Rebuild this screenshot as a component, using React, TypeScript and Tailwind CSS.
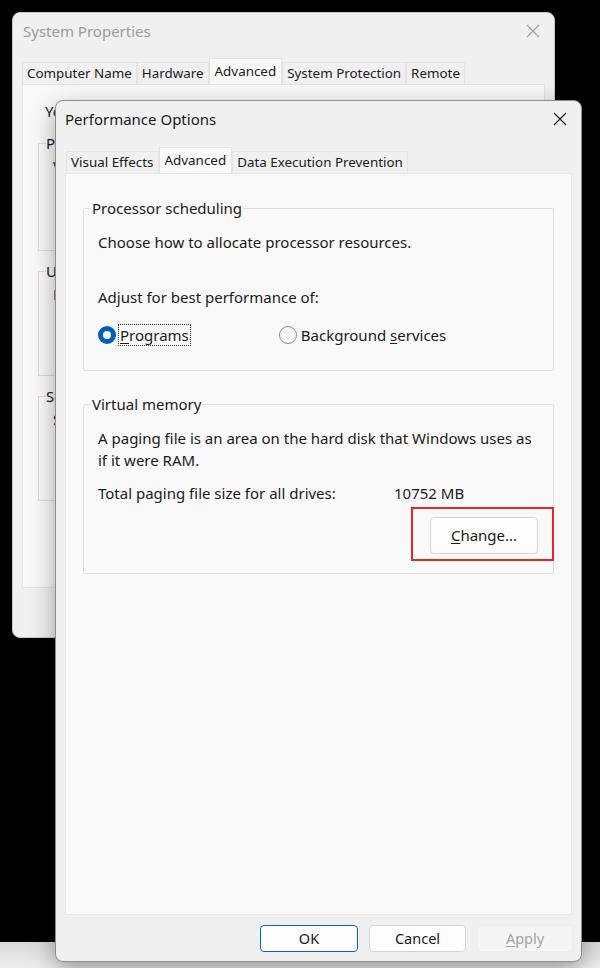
import React from "react";

const font = { fontFamily: '"Noto Sans", "Segoe UI", Arial, sans-serif' };

const CloseIcon = ({ color }: { color: string }) => (
  <svg width="16" height="16" viewBox="0 0 16 16">
    <path d="M2 2 L14 14 M14 2 L2 14" stroke={color} strokeWidth="1.2" fill="none" />
  </svg>
);

const Tab = ({ label, active }: { label: string; active?: boolean }) => (
  <div
    className={
      active
        ? "h-[26px] -mb-[1px] px-[5px] flex items-center bg-[#f9f9f9] border border-b-0 border-[#e3e3e3] text-[#1a1a1a] relative z-10"
        : "h-[22px] mt-[4px] px-[4px] flex items-center bg-[#f0f0f0] border border-b-0 border-[#e3e3e3] text-[#1a1a1a]"
    }
  >
    <span>{label}</span>
  </div>
);

const Radio = ({ checked }: { checked?: boolean }) =>
  checked ? (
    <div className="w-[18px] h-[18px] rounded-full bg-[#005fb8] flex items-center justify-center">
      <div className="w-[8px] h-[8px] rounded-full bg-white" />
    </div>
  ) : (
    <div className="w-[18px] h-[18px] rounded-full border border-[#8a8a8a] bg-[#f6f6f6]" />
  );

const Group = ({ title, className, children }: { title: string; className: string; children: React.ReactNode }) => (
  <fieldset className={"border border-[#dedede] rounded-[2px] pl-[14px] " + className}>
    <legend className="-ml-[7px] px-[1px] text-[#1a1a1a] leading-[20px]">{title}</legend>
    {children}
  </fieldset>
);

const BackGroup = ({ title, line, className }: { title: string; line: string; className: string }) => (
  <fieldset className={"border border-[#dcdcdc] pl-[14px] whitespace-nowrap " + className}>
    <legend className="-ml-[7px] leading-[20px]">{title}</legend>
    <div className="mt-[2px]">{line}</div>
  </fieldset>
);

const BackWindow = () => (
  <div className="absolute left-[12px] top-[12px] w-[543px] h-[626px] rounded-[8px] bg-[#f0f0f0] border border-[#c8c8c8] flex flex-col">
    <div className="h-[36px] flex items-center justify-between pl-[10px] pr-[13px] text-[15px] text-[#9b9b9b]">
      <span>System Properties</span>
      <CloseIcon color="#a0a0a0" />
    </div>
    <div className="flex ml-[9px] mt-[9px] text-[13.4px]">
      <Tab label="Computer Name" />
      <Tab label="Hardware" />
      <Tab label="Advanced" active />
      <Tab label="System Protection" />
      <Tab label="Remote" />
    </div>
    <div className="mx-[9px] h-[504px] bg-[#f9f9f9] border border-[#e3e3e3] text-[15px] text-[#1a1a1a] pl-[15px] pr-[14px] pt-[15px] overflow-hidden">
      <div className="ml-[7px] leading-[22px] whitespace-nowrap">
        You must be logged on as an Administrator to make most of these changes.
      </div>
      <div className="mt-[11px] flex flex-col gap-[10px]">
        <BackGroup title="Performance" line="Visual effects, processor scheduling, memory usage" className="h-[118px]" />
        <BackGroup title="User Profiles" line="Desktop settings related to your sign-in" className="h-[115px]" />
        <BackGroup title="Startup and Recovery" line="System startup, system failure, and debugging" className="h-[115px]" />
      </div>
    </div>
  </div>
);

const Button = ({ label, kind, w }: { label: React.ReactNode; kind: "primary" | "normal" | "disabled"; w: string }) => {
  const cls =
    kind === "primary"
      ? "border-[#0067c0] bg-[#fdfdfd] text-[#1a1a1a]"
      : kind === "normal"
      ? "border-[#d4d4d4] bg-[#fdfdfd] text-[#1a1a1a]"
      : "border-[#ececec] bg-[#f5f5f5] text-[#a2a2a2]";
  return (
    <div className={"h-[27px] rounded-[4px] border flex items-center justify-center text-[14.5px] " + w + " " + cls}>
      {label}
    </div>
  );
};

const FrontWindow = () => (
  <div className="absolute left-[55px] top-[100px] w-[527px] h-[862px] rounded-[8px] bg-[#f0f0f0] border border-[#8c8c8c] shadow-[0_8px_24px_rgba(0,0,0,0.35)] flex flex-col">
    <div className="h-[36px] flex items-center justify-between pl-[9px] pr-[13px] text-[15px] text-[#1a1a1a]">
      <span>Performance Options</span>
      <CloseIcon color="#222" />
    </div>
    <div className="flex ml-[10px] mt-[10px] text-[13.4px]">
      <Tab label="Visual Effects" />
      <Tab label="Advanced" active />
      <Tab label="Data Execution Prevention" />
    </div>
    <div className="mx-[9px] h-[742px] bg-[#f9f9f9] border border-[#e6e6e6] px-[17px] pt-[24px] text-[15px] text-[#1a1a1a]">
      <Group title="Processor scheduling" className="h-[173px]">
        <div className="mt-[13px] leading-[22px]">Choose how to allocate processor resources.</div>
        <div className="mt-[33px] leading-[22px]">Adjust for best performance of:</div>
        <div className="mt-[16px] flex items-center">
          <Radio checked />
          <span className="ml-[2px] px-[1px] border border-dotted border-[#333] leading-[20px]">
            <span className="underline underline-offset-2">P</span>rograms
          </span>
          <div className="ml-[88px] flex items-center gap-[4px]">
            <Radio />
            <span>
              Background <span className="underline underline-offset-2">s</span>ervices
            </span>
          </div>
        </div>
      </Group>
      <Group title="Virtual memory" className="mt-[23px] h-[180px]">
        <div className="mt-[13px] leading-[22px] whitespace-nowrap">
          A paging file is an area on the hard disk that Windows uses as
          <br />
          if it were RAM.
        </div>
        <div className="mt-[11px] flex leading-[22px]">
          <span className="w-[296px]">Total paging file size for all drives:</span>
          <span>10752 MB</span>
        </div>
        <div className="flex justify-end mt-[3px] -mr-[1px]">
          <div className="border-2 border-[#e2262b] pl-[17px] pr-[14px] pt-[8px] pb-[5px]">
            <div className="w-[108px] h-[37px] rounded-[4px] border border-[#d4d4d4] bg-[#fdfdfd] flex items-center justify-center">
              <span>
                <span className="underline underline-offset-2">C</span>hange...
              </span>
            </div>
          </div>
        </div>
      </Group>
    </div>
    <div className="flex gap-[11px] justify-end pr-[8px] mt-[10px]">
      <Button label="OK" kind="primary" w="w-[98px]" />
      <Button label="Cancel" kind="normal" w="w-[97px]" />
      <Button
        w="w-[96px]"
        label={
          <span>
            <span className="underline underline-offset-2">A</span>pply
          </span>
        }
        kind="disabled"
      />
    </div>
  </div>
);

export default function App() {
  return (
    <div className="w-[600px] h-[968px] bg-black relative overflow-hidden" style={font}>
      <div className="absolute left-0 right-0 bottom-0 h-[26px] bg-gradient-to-b from-[#d8d8d8] to-[#eeeeee]" />
      <BackWindow />
      <FrontWindow />
    </div>
  );
}
